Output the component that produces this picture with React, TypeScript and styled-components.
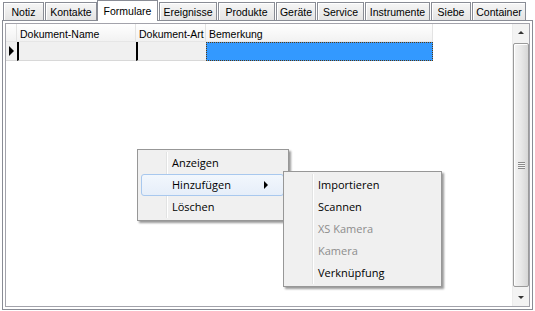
import React from "react";
import styled, { createGlobalStyle, css } from "styled-components";

const GlobalStyle = createGlobalStyle`
  html, body { margin: 0; padding: 0; background: #fff; }
  body { font-family: "Liberation Sans", Arial, sans-serif; }
  #root { width: 535px; height: 311px; }
  * { box-sizing: border-box; }
`;

const Window = styled.div`
  position: relative;
  width: 535px;
  height: 311px;
  background: #fff;
  display: flex;
  flex-direction: column;
  overflow: hidden;
`;

const TabStrip = styled.div`
  position: relative;
  z-index: 2;
  height: 20px;
  display: flex;
  align-items: flex-end;
  gap: 1px;
  padding-left: 3px;
`;

const Tab = styled.div<{ $w: number; $active?: boolean }>`
  width: ${(p) => p.$w}px;
  height: 18px;
  border: 1px solid #898c95;
  border-bottom: none;
  background: linear-gradient(#f6f6f6, #e4e4e4);
  box-shadow: inset 1px 1px 0 #fff;
  font-size: 10.5px;
  color: #000;
  display: flex;
  align-items: center;
  justify-content: center;
  padding-top: 1px;
  white-space: nowrap;
  ${(p) =>
    p.$active &&
    css`
      height: 21px;
      margin-bottom: -1px;
      margin-left: -1px;
      background: #fff;
      box-shadow: none;
      align-items: flex-start;
      padding-top: 4px;
    `}
`;

const Panel = styled.div`
  position: relative;
  z-index: 1;
  flex: 1;
  margin: 0 2px 1px 2px;
  border: 1px solid #898c95;
  padding: 2px;
  display: flex;
  background: #fff;
`;

const Grid = styled.div`
  flex: 1;
  border: 1px solid #a3a3ab;
  display: flex;
  background: #fff;
`;

const GridBody = styled.div`
  flex: 1;
  display: flex;
  flex-direction: column;
`;

const HeaderRow = styled.div`
  display: flex;
  height: 18px;
`;

const HeaderCell = styled.div<{ $w: number }>`
  width: ${(p) => p.$w}px;
  height: 100%;
  background: linear-gradient(#ffffff, #f2f2f2);
  border-right: 1px solid #e3e3e3;
  border-bottom: 1px solid #e6e6e6;
  font-size: 10.5px;
  color: #000;
  padding: 4px 0 0 3px;
  white-space: nowrap;
  overflow: hidden;
`;

const DataRow = styled.div`
  display: flex;
  height: 19px;
`;

const RowHeaderCell = styled.div<{ $w: number }>`
  width: ${(p) => p.$w}px;
  height: 100%;
  background: #f0f0f0;
  border-bottom: 1px solid #d8d8d8;
  display: flex;
  align-items: center;
  padding-left: 3px;
`;

const RowArrow = styled.div`
  width: 0;
  height: 0;
  border-left: 5px solid #000;
  border-top: 5px solid transparent;
  border-bottom: 5px solid transparent;
`;

const DataCell = styled.div<{ $w: number; $selected?: boolean }>`
  width: ${(p) => p.$w}px;
  height: 100%;
  background: #f0f0f0;
  border-left: 2px solid #000;
  border-bottom: 1px solid #d8d8d8;
  ${(p) =>
    p.$selected &&
    css`
      background: #3399ff;
      border: 1px dotted #5a3a10;
    `}
`;

const Scrollbar = styled.div`
  width: 17px;
  display: flex;
  flex-direction: column;
  background: #f3f3f3;
  border-left: 1px solid #ececec;
`;

const ScrollButton = styled.div`
  height: 17px;
  display: flex;
  align-items: center;
  justify-content: center;
`;

const ArrowGlyph = styled.div<{ $dir: "up" | "down" }>`
  width: 0;
  height: 0;
  border-left: 3px solid transparent;
  border-right: 3px solid transparent;
  ${(p) =>
    p.$dir === "up"
      ? css`border-bottom: 3px solid #333;`
      : css`border-top: 3px solid #333;`}
`;

const Thumb = styled.div`
  flex: 1;
  margin: 2px 0 2px 0;
  border: 1px solid #9a9a9a;
  border-radius: 2px;
  background: linear-gradient(90deg, #f4f4f4, #e8e8e8 50%, #d6d6d6);
  box-shadow: inset 1px 1px 0 #fff;
  display: flex;
  align-items: center;
  justify-content: center;
`;

const Grip = styled.div`
  width: 7px;
  height: 7px;
  background: repeating-linear-gradient(#8a8a8a 0 1px, #f4f4f4 1px 2px);
`;

const Menu = styled.div<{ $x: number; $y: number; $w: number }>`
  position: absolute;
  z-index: 5;
  left: ${(p) => p.$x}px;
  top: ${(p) => p.$y}px;
  width: ${(p) => p.$w}px;
  padding: 2px;
  background: #f0f0f0;
  border: 1px solid #979797;
  box-shadow: 2px 2px 2px rgba(0, 0, 0, 0.4);
  font-family: "Open Sans", "Noto Sans", sans-serif;
  font-size: 11px;
  &::before {
    content: "";
    position: absolute;
    top: 2px;
    bottom: 2px;
    left: 28px;
    width: 1px;
    background: #e2e3e3;
    box-shadow: 1px 0 0 #fff;
  }
`;

const MenuItem = styled.div<{ $hover?: boolean; $disabled?: boolean }>`
  position: relative;
  height: 22px;
  display: flex;
  align-items: center;
  padding-left: 30px;
  padding-right: 10px;
  padding-bottom: 2px;
  margin-right: 2px;
  margin-left: 1px;
  color: ${(p) => (p.$disabled ? "#8d8d8d" : "#000")};
  border: 1px solid transparent;
  border-radius: 3px;
  ${(p) =>
    p.$hover &&
    css`
      border-color: #a8c8ee;
      background: linear-gradient(#f2f7fd, #e6eef9);
    `}
`;

const ItemLabel = styled.span`
  flex: 1;
`;

const SubArrow = styled.div`
  width: 0;
  height: 0;
  border-left: 4px solid #000;
  border-top: 4px solid transparent;
  border-bottom: 4px solid transparent;
  margin-right: 5px;
  margin-top: 2px;
`;

const tabs = [
  { label: "Notiz", w: 41 },
  { label: "Kontakte", w: 52 },
  { label: "Formulare", w: 61, active: true },
  { label: "Ereignisse", w: 58 },
  { label: "Produkte", w: 57 },
  { label: "Geräte", w: 40 },
  { label: "Service", w: 47 },
  { label: "Instrumente", w: 65 },
  { label: "Siebe", w: 40 },
  { label: "Container", w: 54 },
];

const columns = [
  { label: "", w: 11 },
  { label: "Dokument-Name", w: 119 },
  { label: "Dokument-Art", w: 70 },
  { label: "Bemerkung", w: 227 },
];

const subItems = [
  { label: "Importieren" },
  { label: "Scannen" },
  { label: "XS Kamera", disabled: true },
  { label: "Kamera", disabled: true },
  { label: "Verknüpfung" },
];

export default function App() {
  return (
    <Window>
      <GlobalStyle />
      <TabStrip>
        {tabs.map((t) => (
          <Tab key={t.label} $w={t.w} $active={t.active}>
            {t.label}
          </Tab>
        ))}
      </TabStrip>
      <Panel>
        <Grid>
          <GridBody>
            <HeaderRow>
              {columns.map((c, i) => (
                <HeaderCell key={i} $w={c.w}>
                  {c.label}
                </HeaderCell>
              ))}
            </HeaderRow>
            <DataRow>
              <RowHeaderCell $w={columns[0].w}>
                <RowArrow />
              </RowHeaderCell>
              <DataCell $w={columns[1].w} />
              <DataCell $w={columns[2].w} />
              <DataCell $w={columns[3].w} $selected />
            </DataRow>
          </GridBody>
          <Scrollbar>
            <ScrollButton>
              <ArrowGlyph $dir="up" />
            </ScrollButton>
            <Thumb>
              <Grip />
            </Thumb>
            <ScrollButton>
              <ArrowGlyph $dir="down" />
            </ScrollButton>
          </Scrollbar>
        </Grid>
      </Panel>

      <Menu $x={137} $y={149} $w={152}>
        <MenuItem>
          <ItemLabel>Anzeigen</ItemLabel>
        </MenuItem>
        <MenuItem $hover>
          <ItemLabel>Hinzufügen</ItemLabel>
          <SubArrow />
        </MenuItem>
        <MenuItem>
          <ItemLabel>Löschen</ItemLabel>
        </MenuItem>
      </Menu>

      <Menu $x={283} $y={171} $w={159}>
        {subItems.map((s) => (
          <MenuItem key={s.label} $disabled={s.disabled}>
            <ItemLabel>{s.label}</ItemLabel>
          </MenuItem>
        ))}
      </Menu>
    </Window>
  );
}
